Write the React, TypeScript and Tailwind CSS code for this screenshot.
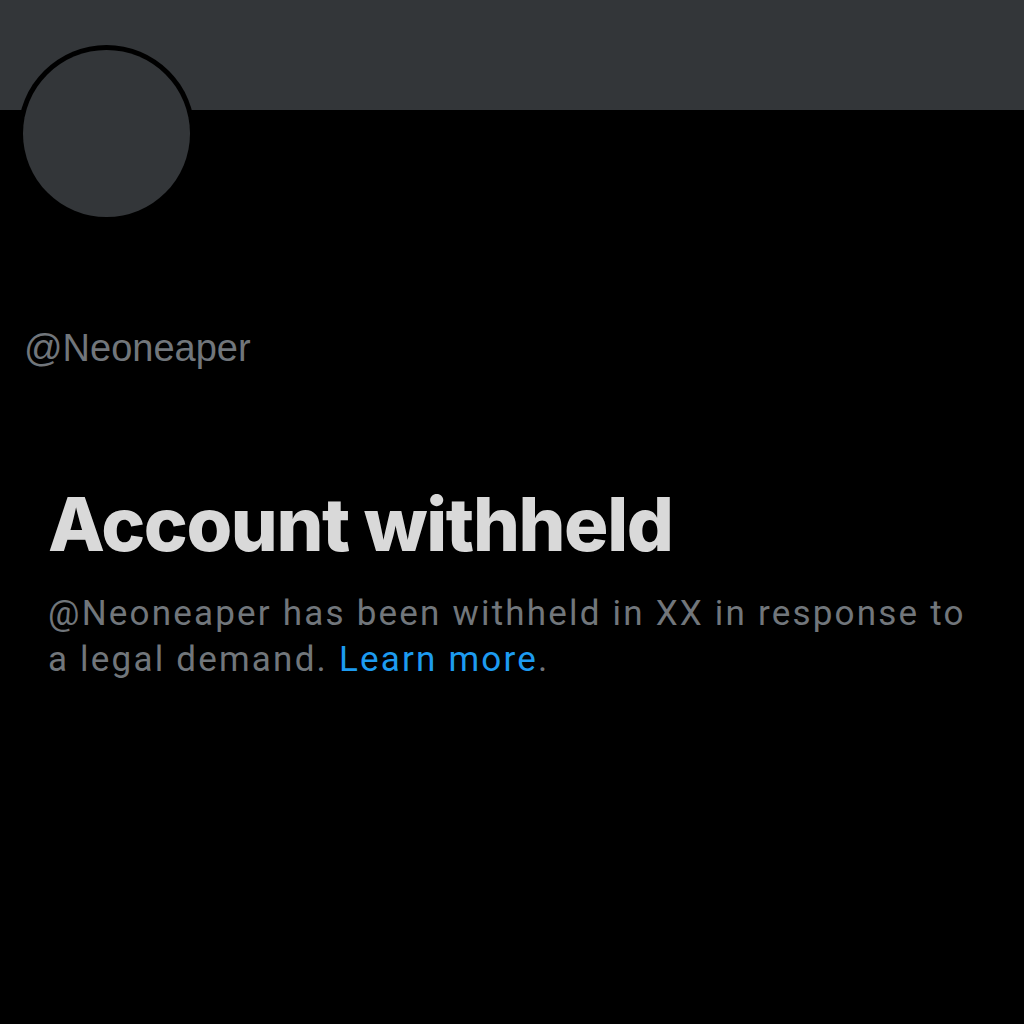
import React from 'react';

const App: React.FC = () => {
  return (
    <div className="w-[1024px] h-[1024px] bg-black overflow-hidden">
      <div className="h-[110px] bg-[#333639]" />
      <div className="px-[18px] -mt-[65px]">
        <div className="w-[177px] h-[177px] rounded-full bg-black p-[5px]">
          <div className="w-full h-full rounded-full bg-[#333639]" />
        </div>
      </div>
      <div className="pl-[24px] mt-[104px] text-[38px] leading-[44px] text-[#71767b] font-['Liberation_Sans',sans-serif]">
        @Neoneaper
      </div>
      <div className="px-[48px] mt-[114px]">
        <h1 className="text-[74px] leading-[80px] font-extrabold tracking-[-1.4px] text-[#d9d9d9] font-['Inter',sans-serif]">
          Account withheld
        </h1>
        <p className="mt-[27px] text-[35px] leading-[46px] tracking-[2.2px] text-[#71767b] font-['Roboto',sans-serif] whitespace-nowrap">
          @Neoneaper has been withheld in XX in response to
          <br />
          a legal demand. <span className="text-[#1d9bf0]">Learn more</span>.
        </p>
      </div>
    </div>
  );
};

export default App;
